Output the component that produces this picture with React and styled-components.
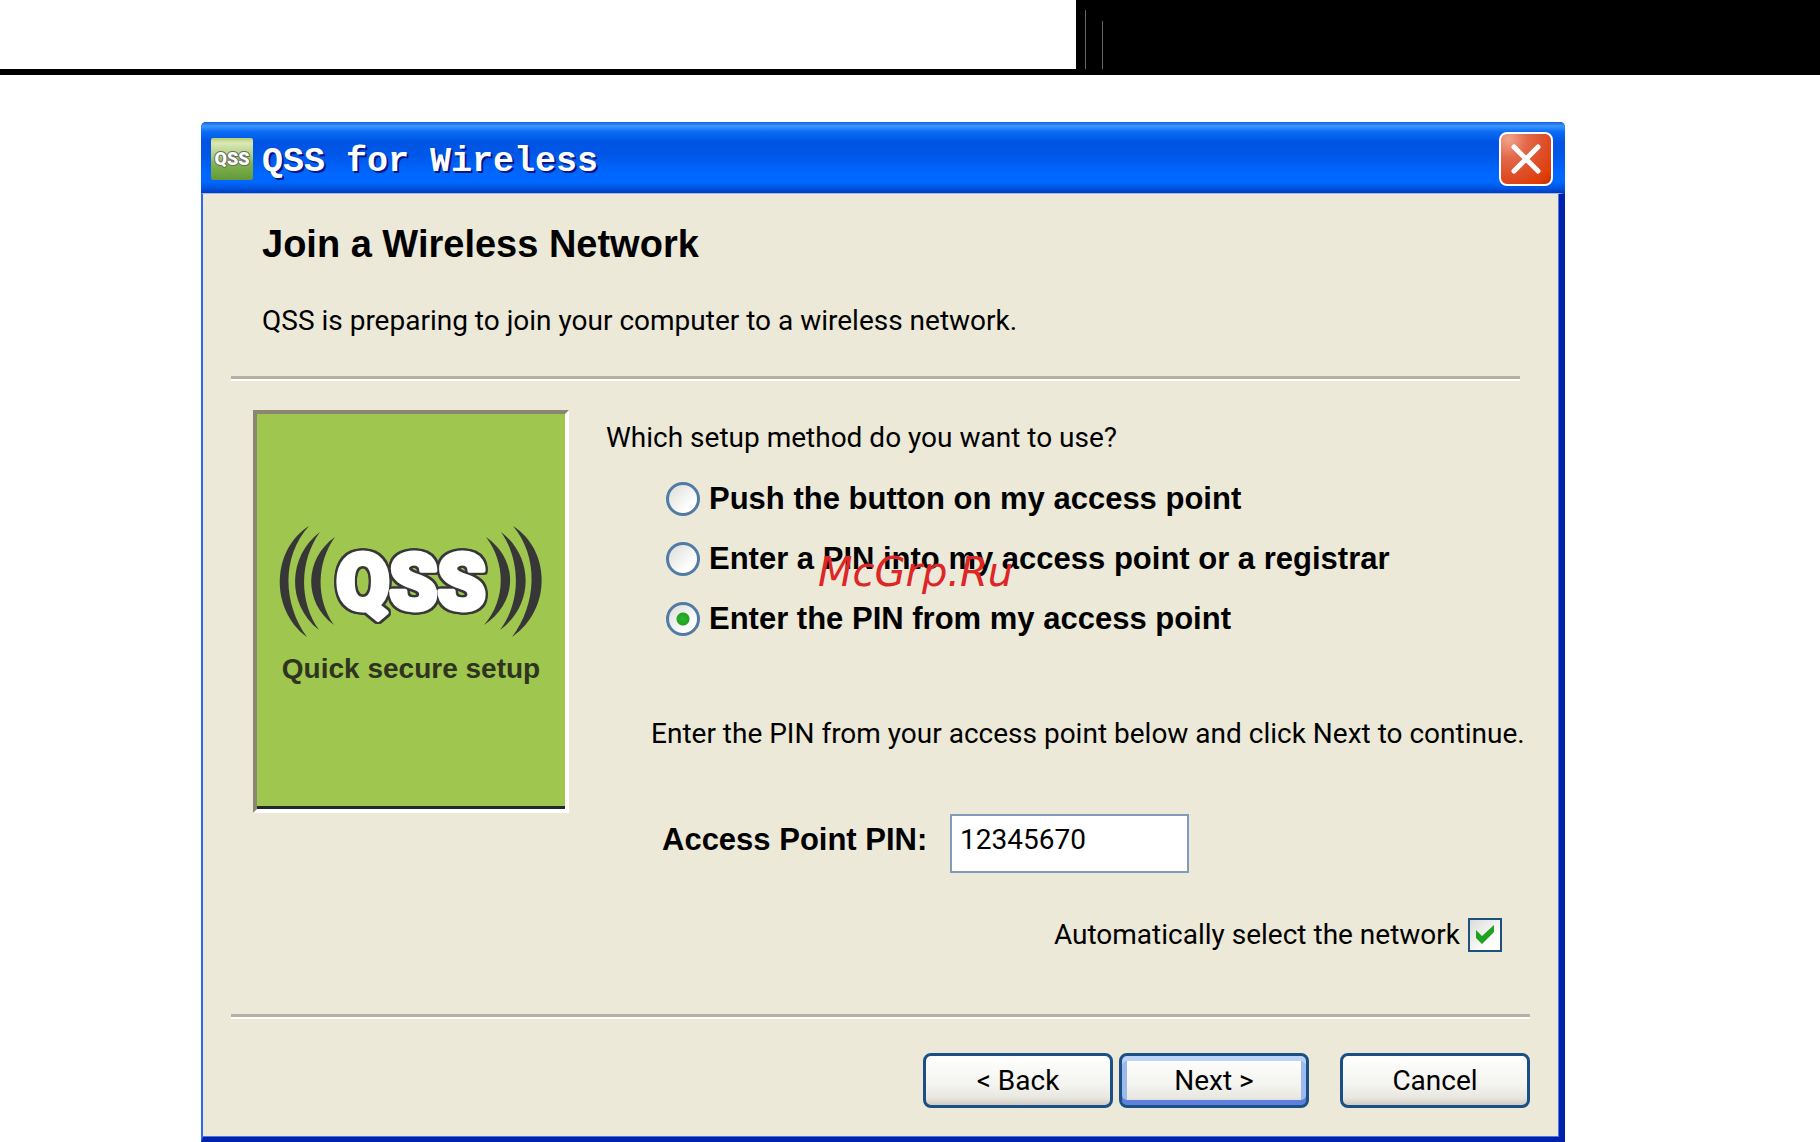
import React, { useState } from 'react'
import styled, { createGlobalStyle } from 'styled-components'

const GlobalStyle = createGlobalStyle`
* {
    box-sizing: border-box;
}
body {
    margin: 0;
    background: #ffffff;
    color: #000000;
    font-family: Roboto, "Liberation Sans", sans-serif;
}
`

const PageHeader = styled.header`
height: 75px;
display: flex;
justify-content: flex-end;
border-bottom: 6px solid #000000;
`

const HeaderBlock = styled.div`
flex: 0 1 744px;
display: flex;
align-items: flex-end;
gap: 16px;
padding-left: 9px;
background: #000000;
`

const HeaderLine = styled.span`
width: 1px;
height: ${(props) => props.$height};
background: #666666;
`

const Window = styled.main`
margin: 47px 255px 0 201px;
border-radius: 5px 5px 0 0;
background: #0a3fd6;
`

const TitleBar = styled.div`
height: 71px;
display: flex;
align-items: center;
gap: 9px;
padding: 2px 12px 0 10px;
border-radius: 5px 5px 0 0;
background: linear-gradient(#1660dc 0, #3d95ff 4px, #0a6bf5 10px, #0054e3 20px, #0056e6 32px, #0066ff 50px, #0068ff 60px, #0050dc 67px, #003cc0 71px);
`

const TitleText = styled.h1`
flex: 1;
margin: 0;
padding-top: 6px;
font-family: "Liberation Mono", monospace;
font-size: 35px;
line-height: 40px;
color: #ffffff;
text-shadow: 2px 2px 0 #0a1883;
`

const CloseButton = styled.button`
width: 54px;
height: 54px;
padding: 0;
display: flex;
align-items: center;
justify-content: center;
border: 2px solid #ffffff;
border-radius: 8px;
background: radial-gradient(circle at 15% 10%, #f0a48e 0, #e3694a 30%, #dd4a22 65%, #e03c04 85%, #b52c08 100%);
`

const Body = styled.div`
border: solid;
border-width: 1px 6px 6px 2px;
border-color: #a9b9e0 #0021ad #0021ad #2a6ae8;
box-shadow: inset -1px -1px 0 #4a78dc;
padding: 30px 29px 29px 28px;
background: #ece9d8;
`

const Heading = styled.h2`
margin: 0 31px;
font-family: "Liberation Sans", sans-serif;
font-size: 38px;
line-height: 40px;
`

const Text = styled.p`
margin: 0;
font-size: 28px;
line-height: 38px;
`

const Intro = styled(Text)`
margin: 38px 31px 36px;
`

const Divider = styled.hr`
height: 5px;
margin: 0 ${(props) => props.$inset || '0'} 0 0;
border: 0;
border-top: 3px solid #b4b1a3;
background: #ffffff;
`

const Content = styled.div`
display: flex;
align-items: flex-start;
gap: 37px;
padding: 29px 0 62px 22px;
`

const Banner = styled.aside`
flex: 0 0 316px;
height: 403px;
border: 4px solid;
border-color: #8a8672 #ffffff #ffffff #8a8672;
background: #9fc64e;
box-shadow: inset 0 -3px 0 #1f2a2a;
`

const Form = styled.form`
flex: 1;
padding-top: 9px;
`

const Options = styled.fieldset`
position: relative;
margin: 0;
padding: 0;
border: 0;
`

const Legend = styled.legend`
padding: 0;
margin-bottom: 12px;
font-size: 28px;
line-height: 38px;
`

const Option = styled.label`
height: 60px;
display: flex;
align-items: center;
gap: 9px;
padding-left: 60px;
font-family: "Liberation Sans", sans-serif;
font-size: 31px;
font-weight: bold;
`

const Radio = styled.input`
appearance: none;
width: 34px;
height: 34px;
margin: 0;
border: 3px solid #4f7ba6;
border-radius: 50%;
background: linear-gradient(135deg, #dcdcd7, #ffffff 75%);

&:checked {
    background: radial-gradient(circle, #2db52d 0, #22a322 6px, transparent 7px), linear-gradient(135deg, #dcdcd7, #ffffff 75%);
}
`

const Watermark = styled.span`
position: absolute;
top: 79px;
left: 212px;
font-family: "DejaVu Sans", sans-serif;
font-size: 40px;
font-style: italic;
line-height: 48px;
color: #de2626;
pointer-events: none;
`

const Instruction = styled(Text)`
margin: 66px 0 61px 45px;
`

const PinRow = styled.div`
display: flex;
align-items: flex-start;
gap: 20px;
padding-left: 56px;
`

const PinLabel = styled.label`
width: 268px;
font-family: "Liberation Sans", sans-serif;
font-size: 31px;
font-weight: bold;
line-height: 52px;
`

const PinInput = styled.input`
width: 239px;
height: 59px;
padding: 0 8px 8px;
border: 2px solid #7f9db9;
background: #ffffff;
color: #000000;
font-family: inherit;
font-size: 28px;
`

const AutoRow = styled.label`
display: flex;
align-items: center;
justify-content: flex-end;
gap: 8px;
margin-top: 45px;
padding-right: 28px;
font-size: 28px;
line-height: 34px;
`

const CheckWrap = styled.span`
display: grid;
width: 34px;
height: 34px;

> * {
    grid-area: 1 / 1;
}
svg {
    pointer-events: none;
}
`

const Checkbox = styled.input`
appearance: none;
width: 34px;
height: 34px;
margin: 0;
border: 2px solid #1c5180;
background: linear-gradient(135deg, #dcdcd7, #ffffff 75%);
`

const Footer = styled.footer`
display: flex;
justify-content: flex-end;
gap: 6px;
padding-top: 34px;
`

const Button = styled.button`
width: 190px;
height: 55px;
margin-left: ${(props) => (props.$apart ? '25px' : '0')};
padding: 0;
border: 3px solid #1a5085;
border-radius: 8px;
background: linear-gradient(#ffffff, #f3f3ef 60%, #e8e7e0 85%, #d3ccc2);
box-shadow: ${(props) => (props.$primary ? 'inset 0 5px 0 #bcd4f6, inset 0 -5px 0 #5c80dc, inset 5px 0 0 #9dbaee, inset -5px 0 0 #9dbaee' : 'none')};
color: #000000;
font-family: inherit;
font-size: 28px;
line-height: 36px;
`

const LogoText = styled.text`
font-family: Roboto, "Liberation Sans", sans-serif;
font-weight: 900;
fill: #ffffff;
`

const Tagline = styled.text`
font-family: "Liberation Sans", sans-serif;
font-size: 28px;
font-weight: bold;
fill: #2f3420;
`

const OutlinedLogo = styled.g`
filter: drop-shadow(2px 0 0 #373737) drop-shadow(-2px 0 0 #373737) drop-shadow(0 2px 0 #373737) drop-shadow(0 -2px 0 #373737);
`

const options = [
    { id: 'push', label: 'Push the button on my access point' },
    { id: 'registrar', label: 'Enter a PIN into my access point or a registrar' },
    { id: 'pin', label: 'Enter the PIN from my access point' },
]

function AppIcon() {
    return (
        <svg width='42' height='42' viewBox='0 0 42 42' aria-hidden='true'>
            <defs>
                <linearGradient id='iconFill' x1='0' y1='0' x2='0' y2='1'>
                    <stop offset='0' stopColor='#b5d06a' />
                    <stop offset='0.12' stopColor='#dbe8b8' />
                    <stop offset='0.45' stopColor='#a9cc78' />
                    <stop offset='0.6' stopColor='#84b44c' />
                    <stop offset='1' stopColor='#62983c' />
                </linearGradient>
            </defs>
            <rect width='42' height='42' rx='2' fill='url(#iconFill)' />
            <LogoText x='21' y='27' fontSize='18' textAnchor='middle' stroke='#666c5c' strokeWidth='2' paintOrder='stroke'>QSS</LogoText>
        </svg>
    )
}

function BannerArt() {
    return (
        <svg width='308' height='390' viewBox='0 0 308 390' role='img' aria-label='QSS'>
            <g fill='#373737'>
                <path d='M52 112 C15 135 12 195 50 223 C26 190 24 143 52 112 Z' />
                <path d='M63 118 C31 142 29 190 62 216 C42 188 42 147 63 118 Z' />
                <path d='M78 123 C47 145 46 188 77 211 C59 186 59 149 78 123 Z' />
                <path d='M256 112 C293 135 296 195 255 223 C280 190 282 143 256 112 Z' />
                <path d='M244 118 C276 142 278 190 243 216 C264 188 264 147 244 118 Z' />
                <path d='M229 123 C261 145 262 188 227 211 C249 186 249 149 229 123 Z' />
            </g>
            <OutlinedLogo>
                <LogoText x='154' y='195' fontSize='77' textAnchor='middle' stroke='#ffffff' strokeWidth='5' strokeLinejoin='round'>QSS</LogoText>
            </OutlinedLogo>
            <Tagline x='154' y='264' textAnchor='middle'>Quick secure setup</Tagline>
        </svg>
    )
}

function App() {
    const [method, setMethod] = useState('pin')
    const [pin, setPin] = useState('12345670')
    const [auto, setAuto] = useState(true)

    return (
        <>
            <GlobalStyle />
            <PageHeader>
                <HeaderBlock>
                    <HeaderLine $height='59px' />
                    <HeaderLine $height='48px' />
                </HeaderBlock>
            </PageHeader>
            <Window>
                <TitleBar>
                    <AppIcon />
                    <TitleText>QSS for Wireless</TitleText>
                    <CloseButton type='button' aria-label='Close'>
                        <svg width='30' height='30' viewBox='0 0 30 30' stroke='#ffffff' strokeWidth='5' strokeLinecap='round'>
                            <path d='M3 3 L27 27 M27 3 L3 27' />
                        </svg>
                    </CloseButton>
                </TitleBar>
                <Body>
                    <Heading>Join a Wireless Network</Heading>
                    <Intro>QSS is preparing to join your computer to a wireless network.</Intro>
                    <Divider $inset='10px' />
                    <Content>
                        <Banner>
                            <BannerArt />
                        </Banner>
                        <Form>
                            <Options>
                                <Legend>Which setup method do you want to use?</Legend>
                                {options.map((option) => (
                                    <Option key={option.id}>
                                        <Radio
                                            type='radio'
                                            name='method'
                                            checked={method === option.id}
                                            onChange={() => setMethod(option.id)}
                                        />
                                        {option.label}
                                    </Option>
                                ))}
                                <Watermark>McGrp.Ru</Watermark>
                            </Options>
                            <Instruction>Enter the PIN from your access point below and click Next to continue.</Instruction>
                            <PinRow>
                                <PinLabel htmlFor='pin'>Access Point PIN:</PinLabel>
                                <PinInput id='pin' type='text' value={pin} onChange={(e) => setPin(e.target.value)} />
                            </PinRow>
                            <AutoRow>
                                Automatically select the network
                                <CheckWrap>
                                    <Checkbox type='checkbox' checked={auto} onChange={(e) => setAuto(e.target.checked)} />
                                    {auto && (
                                        <svg width='34' height='34' viewBox='0 0 34 34' fill='#21a121'>
                                            <path d='M8 12 L14 18 L26 7 L26 14 L14 26 L8 20 Z' />
                                        </svg>
                                    )}
                                </CheckWrap>
                            </AutoRow>
                        </Form>
                    </Content>
                    <Divider />
                    <Footer>
                        <Button type='button'>&lt; Back</Button>
                        <Button type='button' $primary>Next &gt;</Button>
                        <Button type='button' $apart>Cancel</Button>
                    </Footer>
                </Body>
            </Window>
        </>
    )
}

export default App
